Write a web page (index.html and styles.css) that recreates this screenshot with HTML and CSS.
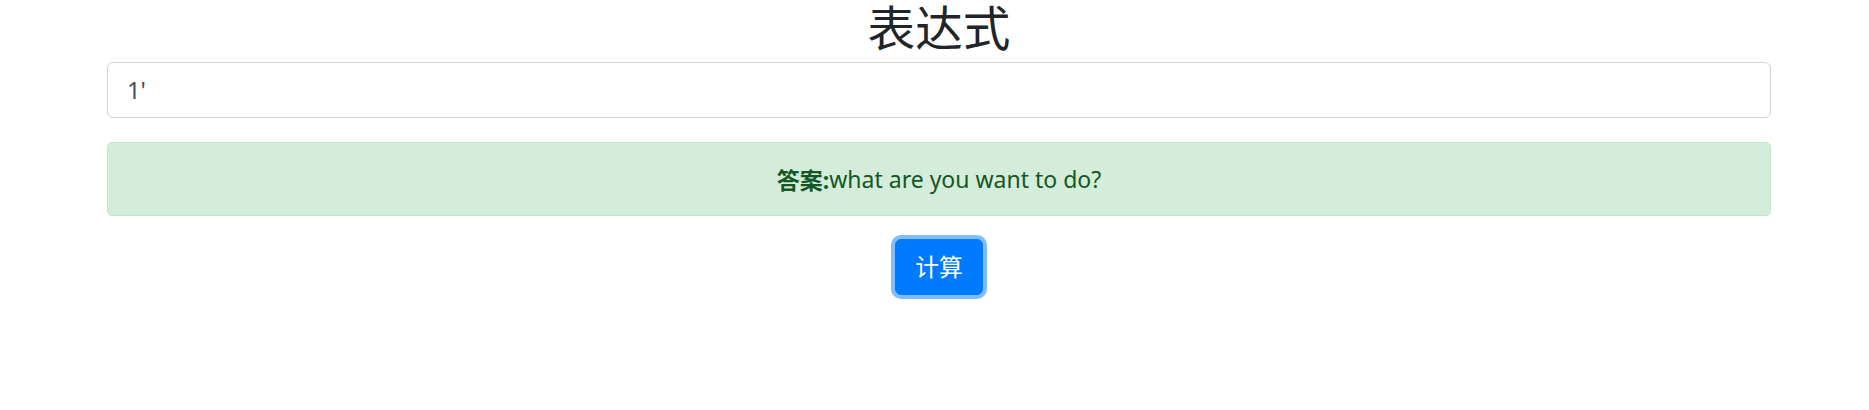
FILE: index.html
```html
<!DOCTYPE html>
<html lang="zh">
<head>
<meta charset="utf-8">
<title>表达式</title>
<link rel="stylesheet" href="styles.css">
</head>
<body>
<div class="container">
  <h1 class="title">表达式</h1>
  <div class="form-group">
    <input class="form-control" type="text" value="1'">
  </div>
  <div class="alert"><strong>答案:</strong>what are you want to do?</div>
  <div class="actions">
    <button class="btn" type="button">计算</button>
  </div>
</div>
</body>
</html>
```
FILE: styles.css
```css
html, body {
  margin: 0;
  padding: 0;
  background: #fff;
}
body {
  font-family: "Noto Sans", "Noto Sans CJK SC", sans-serif;
  color: #212529;
  min-height: 410px;
}
.container {
  margin-left: 107px;
  width: 1664px;
  padding-bottom: 40px;
}
.title {
  margin: 0 0 10px;
  font-family: "Noto Sans CJK SC", sans-serif;
  font-size: 47.6px;
  font-weight: 400;
  line-height: 52px;
  text-align: center;
  color: #212529;
}
.form-group {
  margin-bottom: 24px;
}
.form-control {
  display: block;
  box-sizing: border-box;
  width: 100%;
  height: 56px;
  padding: 9px 19px;
  font-family: inherit;
  font-size: 23.8px;
  line-height: 36px;
  color: #495057;
  background: #fff;
  border: 1px solid #ced4da;
  border-radius: 6px;
  outline: none;
}
.alert {
  box-sizing: border-box;
  height: 74px;
  display: flex;
  align-items: center;
  justify-content: center;
  font-size: 23px;
  color: #155724;
  background: #d4edda;
  border: 1px solid #c3e6cb;
  border-radius: 5px;
  margin-bottom: 23px;
}
.alert strong {
  font-weight: 700;
}
.actions {
  display: flex;
  justify-content: center;
}
.btn {
  box-sizing: border-box;
  height: 56px;
  padding: 0 19px;
  font-family: inherit;
  font-size: 23.8px;
  line-height: 36px;
  color: #fff;
  background: #007bff;
  border: 1px solid #007bff;
  border-radius: 6px;
  box-shadow: 0 0 0 4px #80bdff;
}
```
